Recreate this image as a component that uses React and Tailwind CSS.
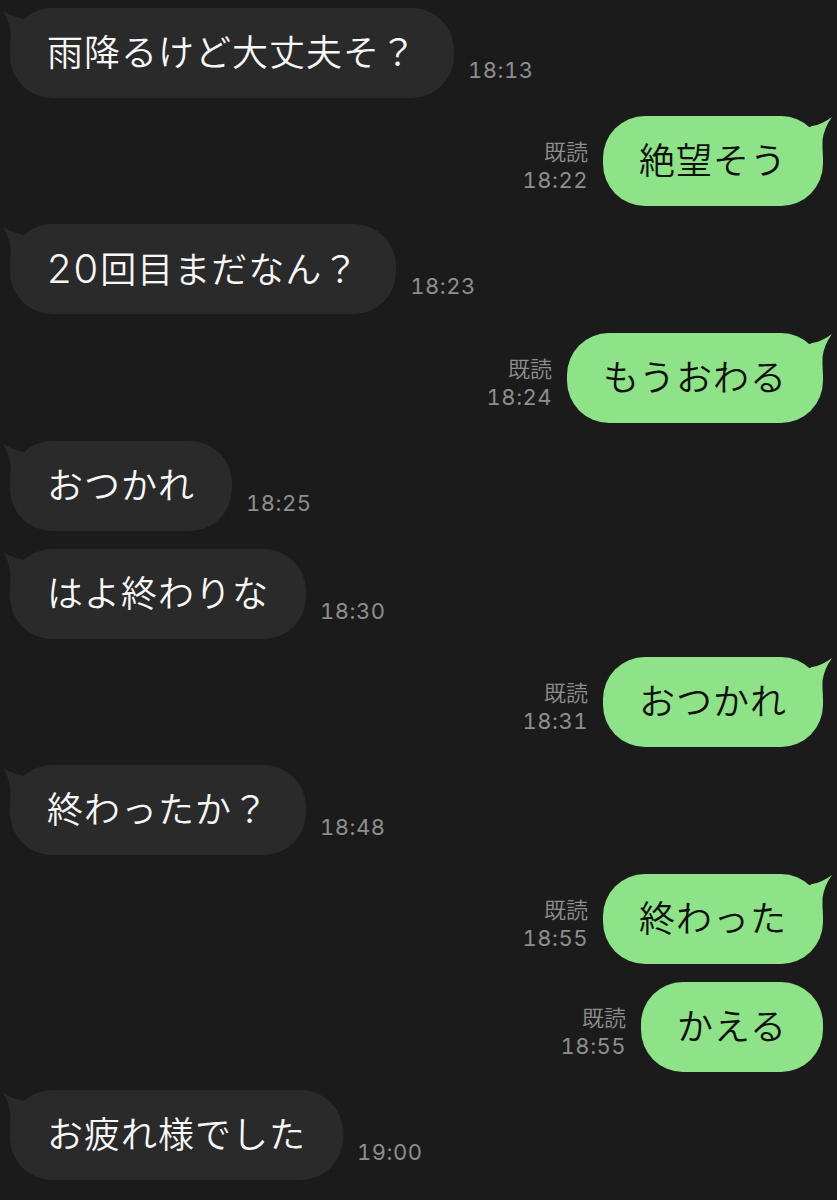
import React from "react";

const messages = [
  { side: "left", text: "雨降るけど大丈夫そ？", time: "18:13", tail: true },
  { side: "right", text: "絶望そう", time: "18:22", tail: true },
  {
    side: "left",
    text: (
      <>
        <span className="text-[40px] tracking-[2px]">20</span>回目まだなん？
      </>
    ),
    time: "18:23",
    tail: true,
  },
  { side: "right", text: "もうおわる", time: "18:24", tail: true },
  { side: "left", text: "おつかれ", time: "18:25", tail: true },
  { side: "left", text: "はよ終わりな", time: "18:30", tail: true },
  { side: "right", text: "おつかれ", time: "18:31", tail: true },
  { side: "left", text: "終わったか？", time: "18:48", tail: true },
  { side: "right", text: "終わった", time: "18:55", tail: true },
  { side: "right", text: "かえる", time: "18:55", tail: false },
  { side: "left", text: "お疲れ様でした", time: "19:00", tail: true },
];

const msgFont = { fontFamily: '"Inter", "Noto Sans CJK JP", "Noto Sans", sans-serif' };
const cjkFont = { fontFamily: '"Noto Sans CJK JP", "Noto Sans", sans-serif' };

function LeftTail() {
  return (
    <svg
      className="absolute left-[-10px] top-0"
      width="30"
      height="40"
      viewBox="0 0 30 40"
    >
      <path d="M21,10 Q11,8.5 3,2.5 Q9,13 10.5,24 L10.5,40 L30,40 L30,14 Z" fill="#2a2a2a" />
    </svg>
  );
}

function RightTail() {
  return (
    <svg
      className="absolute right-[-10px] top-0"
      width="30"
      height="40"
      viewBox="0 0 30 40"
    >
      <path d="M9,10 Q19,8.5 29,1 Q21,12 19.5,24 L19.5,40 L0,40 L0,14 Z" fill="#8ee388" />
    </svg>
  );
}

function Time({ children }) {
  return (
    <span className="text-[22px] leading-none tracking-[0.5px] tabular-nums text-[#8e8e8e] font-['Inter',sans-serif]">
      {children}
    </span>
  );
}

function LeftMsg({ m }) {
  return (
    <div className="flex items-end pl-[10px]">
      <div className="relative flex h-[90px] items-center rounded-[42px] bg-[#2a2a2a] px-[37px]">
        {m.tail && <LeftTail />}
        <span
          style={msgFont}
          className="relative text-[36px] font-[350] leading-none tracking-[1px] text-[#f7f7f7] whitespace-nowrap"
        >
          {m.text}
        </span>
      </div>
      <div className="ml-[14px] mb-[14px]">
        <Time>{m.time}</Time>
      </div>
    </div>
  );
}

function RightMsg({ m }) {
  return (
    <div className="flex items-end justify-end pr-[14px]">
      <div className="mr-[15px] mb-[15px] flex flex-col items-end">
        <span
          style={cjkFont}
          className="mb-[8px] text-[22px] font-[350] leading-none text-[#8e8e8e]"
        >
          既読
        </span>
        <Time>{m.time}</Time>
      </div>
      <div className="relative flex h-[90px] items-center rounded-[42px] bg-[#8ee388] px-[36px]">
        {m.tail && <RightTail />}
        <span
          style={msgFont}
          className="relative text-[36px] font-[350] leading-none tracking-[1px] text-[#111111] whitespace-nowrap"
        >
          {m.text}
        </span>
      </div>
    </div>
  );
}

export default function App() {
  return (
    <div className="h-[1200px] w-[837px] overflow-hidden bg-[#1b1b1b] pt-[8px]">
      <div className="flex flex-col gap-[18.2px]">
        {messages.map((m, i) =>
          m.side === "left" ? <LeftMsg key={i} m={m} /> : <RightMsg key={i} m={m} />
        )}
      </div>
    </div>
  );
}
